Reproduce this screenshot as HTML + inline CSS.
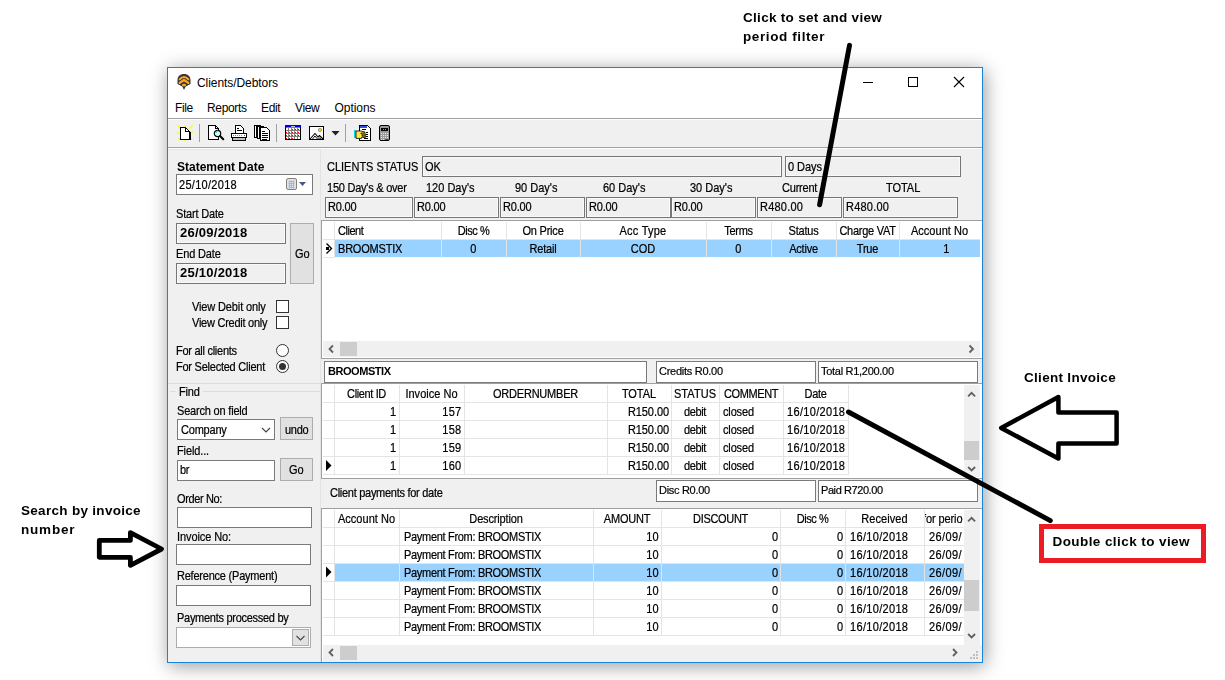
<!DOCTYPE html><html><head><meta charset="utf-8"><title>Clients/Debtors</title><style>
html,body{margin:0;padding:0;background:#fff;}
body{width:1225px;height:680px;position:relative;overflow:hidden;font-family:"Liberation Sans",sans-serif;}
div{position:absolute;box-sizing:border-box;white-space:nowrap;}
.t{font-size:11px;line-height:14px;color:#000;transform:scaleY(1.1);will-change:transform;-webkit-text-stroke:0.2px #000;}
.tb{font-size:11px;line-height:14px;color:#000;font-weight:bold;will-change:transform;}
.m{font-size:12px;line-height:16px;color:#000;letter-spacing:-0.35px;}
.ann{font-size:13.5px;line-height:19px;font-weight:bold;color:#000;letter-spacing:0.3px;}
.sunk{border:1px solid #767676;background:#f0f0f0;box-shadow:inset 0 0 0 1px #fafafa;}
.sunkw{border:1px solid #7a7a7a;background:#fff;}
.btn{border:1px solid #adadad;background:#e1e1e1;text-align:center;}
.hl{background:#99d1ff;}
.grid{background:#fff;border:1px solid #828790;overflow:hidden;}
.vl{background:#e6e6e6;width:1px;}
.hln{background:#e6e6e6;height:1px;}
.sb{background:#f0f0f0;}
.th{background:#cdcdcd;}
svg{position:absolute;overflow:visible;}
</style></head><body>
<div style="left:167px;top:67px;width:816px;height:596px;box-shadow:2px 3px 18px 0 rgba(0,0,0,0.40);background:#f0f0f0;border:1px solid #1883d7;"></div>
<div class="" style="left:168px;top:68px;width:814px;height:50px;background:#fff;"></div>
<div class="m" style="left:197px;top:75px;letter-spacing:-0.07px;">Clients/Debtors</div>
<div class="m" style="left:175px;top:100px;">File</div>
<div class="m" style="left:207px;top:100px;">Reports</div>
<div class="m" style="left:261px;top:100px;">Edit</div>
<div class="m" style="left:295px;top:100px;">View</div>
<div class="m" style="left:334.5px;top:100px;letter-spacing:-0.04px;">Options</div>
<div class="" style="left:168px;top:118px;width:814px;height:1px;background:#a0a0a0;"></div>
<div class="" style="left:168px;top:119px;width:814px;height:1px;background:#fff;"></div>
<div class="" style="left:168px;top:147px;width:814px;height:1px;background:#a0a0a0;"></div>
<div class="" style="left:168px;top:148px;width:814px;height:1px;background:#fff;"></div>
<div class="" style="left:168px;top:149px;width:153px;height:1px;background:#e3e3e3;"></div>
<div class="" style="left:320px;top:149px;width:1px;height:513px;background:#e3e3e3;"></div>
<div class="" style="left:168px;top:383px;width:152px;height:1px;background:#dcdcdc;"></div>
<div class="tb" style="left:176.5px;top:160px;font-size:12px;">Statement Date</div>
<div class="sunkw" style="left:176px;top:174px;width:137px;height:21px;"></div>
<div class="t" style="left:179px;top:178px;letter-spacing:0.29px;">25/10/2018</div>
<div class="t" style="left:176px;top:207px;letter-spacing:-0.17px;">Start Date</div>
<div class="sunk" style="left:176px;top:223px;width:110px;height:21px;"></div>
<div class="tb" style="left:179.5px;top:225px;font-size:13px;line-height:16px;letter-spacing:0.25px;">26/09/2018</div>
<div class="t" style="left:176px;top:247px;letter-spacing:-0.16px;">End Date</div>
<div class="sunk" style="left:176px;top:263px;width:110px;height:21px;"></div>
<div class="tb" style="left:179.5px;top:265px;font-size:13px;line-height:16px;letter-spacing:0.25px;">25/10/2018</div>
<div class="btn" style="left:290px;top:223px;width:24px;height:61px;"></div>
<div class="t" style="left:295px;top:247px;letter-spacing:-0.12px;">Go</div>
<div class="t" style="left:192px;top:300px;letter-spacing:-0.13px;">View Debit only</div>
<div class="" style="left:276px;top:300px;width:13px;height:13px;border:1px solid #333;background:#fff;"></div>
<div class="t" style="left:192px;top:316px;letter-spacing:-0.25px;">View Credit only</div>
<div class="" style="left:276px;top:316px;width:13px;height:13px;border:1px solid #333;background:#fff;"></div>
<div class="t" style="left:176px;top:344px;letter-spacing:-0.27px;">For all clients</div>
<div class="" style="left:276px;top:344px;width:13px;height:13px;border:1px solid #333;background:#fff;border-radius:50%;"></div>
<div class="t" style="left:176px;top:360px;letter-spacing:-0.24px;">For Selected Client</div>
<div class="" style="left:276px;top:360px;width:13px;height:13px;border:1px solid #333;background:#fff;border-radius:50%;"></div>
<div class="" style="left:279px;top:363px;width:7px;height:7px;background:#333;border-radius:50%;"></div>
<div class="" style="left:170px;top:391px;width:150px;height:1px;background:#dcdcdc;"></div>
<div class="t" style="left:176px;top:385px;letter-spacing:-0.19px;background:#f0f0f0;padding:0 3px;">Find</div>
<div class="t" style="left:177px;top:404px;letter-spacing:-0.19px;">Search on field</div>
<div class="sunkw" style="left:177px;top:419px;width:98px;height:21px;"></div>
<div class="t" style="left:180.5px;top:422.5px;letter-spacing:-0.21px;">Company</div>
<div class="btn" style="left:280px;top:417px;width:33px;height:23px;"></div>
<div class="t" style="left:284.8px;top:422.5px;letter-spacing:-0.25px;">undo</div>
<div class="t" style="left:177px;top:444px;letter-spacing:-0.12px;">Field...</div>
<div class="sunkw" style="left:177px;top:460px;width:98px;height:21px;"></div>
<div class="t" style="left:180px;top:463px;letter-spacing:-0.25px;">br</div>
<div class="btn" style="left:280px;top:458px;width:33px;height:23px;"></div>
<div class="t" style="left:289.2px;top:463px;letter-spacing:-0.12px;">Go</div>
<div class="t" style="left:177px;top:492px;letter-spacing:-0.37px;">Order No:</div>
<div class="sunkw" style="left:177px;top:507px;width:135px;height:21px;"></div>
<div class="t" style="left:177px;top:530px;letter-spacing:-0.09px;">Invoice No:</div>
<div class="sunkw" style="left:176px;top:544px;width:135px;height:21px;"></div>
<div class="t" style="left:177px;top:569px;letter-spacing:-0.22px;">Reference (Payment)</div>
<div class="sunkw" style="left:176px;top:585px;width:135px;height:21px;"></div>
<div class="t" style="left:177px;top:611px;letter-spacing:-0.28px;">Payments processed by</div>
<div class="" style="left:176px;top:627px;width:135px;height:21px;border:1px solid #adadad;background:#fff;"></div>
<div class="btn" style="left:292px;top:629px;width:17px;height:17px;"></div>
<div class="t" style="left:327px;top:160px;">CLIENTS STATUS</div>
<div class="sunk" style="left:422px;top:156px;width:360px;height:21px;"></div>
<div class="t" style="left:425px;top:160px;">OK</div>
<div class="sunk" style="left:785px;top:156px;width:176px;height:21px;"></div>
<div class="t" style="left:788px;top:160px;letter-spacing:-0.07px;">0 Days</div>
<div class="t" style="left:327px;top:181px;letter-spacing:-0.24px;">150 Day's &amp; over</div>
<div class="t" style="left:426px;top:181px;">120 Day's</div>
<div class="t" style="left:515px;top:181px;">90 Day's</div>
<div class="t" style="left:603px;top:181px;">60 Day's</div>
<div class="t" style="left:690px;top:181px;">30 Day's</div>
<div class="t" style="left:782px;top:181px;letter-spacing:-0.21px;">Current</div>
<div class="t" style="left:886px;top:181px;letter-spacing:-0.04px;">TOTAL</div>
<div class="sunk" style="left:325px;top:197px;width:88px;height:21px;"></div>
<div class="t" style="left:328px;top:200px;letter-spacing:-0.18px;">R0.00</div>
<div class="sunk" style="left:414px;top:197px;width:85px;height:21px;"></div>
<div class="t" style="left:417px;top:200px;letter-spacing:-0.18px;">R0.00</div>
<div class="sunk" style="left:500px;top:197px;width:85px;height:21px;"></div>
<div class="t" style="left:503px;top:200px;letter-spacing:-0.18px;">R0.00</div>
<div class="sunk" style="left:586px;top:197px;width:85px;height:21px;"></div>
<div class="t" style="left:589px;top:200px;letter-spacing:-0.18px;">R0.00</div>
<div class="sunk" style="left:671px;top:197px;width:85px;height:21px;"></div>
<div class="t" style="left:674px;top:200px;letter-spacing:-0.18px;">R0.00</div>
<div class="sunk" style="left:757px;top:197px;width:85px;height:21px;"></div>
<div class="t" style="left:760px;top:200px;letter-spacing:0.21px;">R480.00</div>
<div class="sunk" style="left:843px;top:197px;width:115px;height:21px;"></div>
<div class="t" style="left:846px;top:200px;letter-spacing:0.21px;">R480.00</div>
<div class="" style="left:321px;top:220px;width:661px;height:139px;background:#fff;border-left:1px solid #a0a0a0;border-top:1px solid #a0a0a0;border-bottom:1px solid #a0a0a0;"></div>
<div class="hl" style="left:335px;top:240px;width:645px;height:17px;"></div>
<div class="t" style="left:337.5px;top:224px;letter-spacing:-0.48px;">Client</div>
<div class="t" style="left:338px;top:242px;letter-spacing:-0.21px;">BROOMSTIX</div>
<div class="t" style="left:441px;top:224px;width:65px;text-align:center;letter-spacing:-0.45px;">Disc %</div>
<div class="t" style="left:441px;top:242px;width:65px;text-align:center;letter-spacing:0.30px;">0</div>
<div class="t" style="left:506px;top:224px;width:74px;text-align:center;letter-spacing:-0.20px;">On Price</div>
<div class="t" style="left:506px;top:242px;width:74px;text-align:center;letter-spacing:-0.21px;">Retail</div>
<div class="t" style="left:580px;top:224px;width:126px;text-align:center;letter-spacing:0.24px;">Acc Type</div>
<div class="t" style="left:580px;top:242px;width:126px;text-align:center;">COD</div>
<div class="t" style="left:706px;top:224px;width:65px;text-align:center;letter-spacing:-0.30px;">Terms</div>
<div class="t" style="left:706px;top:242px;width:65px;text-align:center;letter-spacing:0.30px;">0</div>
<div class="t" style="left:771px;top:224px;width:65px;text-align:center;letter-spacing:-0.22px;">Status</div>
<div class="t" style="left:771px;top:242px;width:65px;text-align:center;letter-spacing:-0.21px;">Active</div>
<div class="t" style="left:836px;top:224px;width:63px;text-align:center;letter-spacing:-0.27px;">Charge VAT</div>
<div class="t" style="left:836px;top:242px;width:63px;text-align:center;letter-spacing:-0.19px;">True</div>
<div class="t" style="left:899px;top:224px;width:81px;text-align:center;letter-spacing:0.03px;">Account No</div>
<div class="t" style="left:899px;top:242px;width:81px;text-align:center;padding-left:14px;letter-spacing:0.30px;">1</div>
<div class="" style="left:334px;top:222px;width:1px;height:36px;background:#e4e4e4;"></div>
<div class="" style="left:441px;top:222px;width:1px;height:36px;background:#e4e4e4;"></div>
<div class="" style="left:506px;top:222px;width:1px;height:36px;background:#e4e4e4;"></div>
<div class="" style="left:580px;top:222px;width:1px;height:36px;background:#e4e4e4;"></div>
<div class="" style="left:706px;top:222px;width:1px;height:36px;background:#e4e4e4;"></div>
<div class="" style="left:771px;top:222px;width:1px;height:36px;background:#e4e4e4;"></div>
<div class="" style="left:836px;top:222px;width:1px;height:36px;background:#e4e4e4;"></div>
<div class="" style="left:899px;top:222px;width:1px;height:36px;background:#e4e4e4;"></div>
<div class="" style="left:323px;top:239px;width:657px;height:1px;background:#e4e4e4;"></div>
<div class="" style="left:323px;top:257px;width:12px;height:1px;background:#e4e4e4;"></div>
<div class="sb" style="left:323px;top:341px;width:657px;height:16px;"></div>
<div class="th" style="left:340px;top:342px;width:17px;height:14px;"></div>
<div class="sunkw" style="left:324px;top:361px;width:323px;height:22px;"></div>
<div class="tb" style="left:327.5px;top:364px;letter-spacing:-0.45px;">BROOMSTIX</div>
<div class="sunkw" style="left:656px;top:361px;width:160px;height:22px;"></div>
<div class="t" style="left:659px;top:364.2px;letter-spacing:-0.27px;transform:none;">Credits R0.00</div>
<div class="sunkw" style="left:818px;top:361px;width:160px;height:22px;"></div>
<div class="t" style="left:821px;top:364.2px;letter-spacing:-0.29px;transform:none;">Total R1,200.00</div>
<div class="" style="left:321px;top:383px;width:661px;height:96px;background:#fff;border-left:1px solid #a0a0a0;border-top:1px solid #a0a0a0;border-bottom:1px solid #a0a0a0;"></div>
<div class="t" style="left:334px;top:387px;width:65px;text-align:center;letter-spacing:-0.38px;">Client ID</div>
<div class="t" style="left:399px;top:387px;width:65px;text-align:center;letter-spacing:0.02px;">Invoice No</div>
<div class="t" style="left:464px;top:387px;width:143px;text-align:center;letter-spacing:-0.21px;">ORDERNUMBER</div>
<div class="t" style="left:607px;top:387px;width:64px;text-align:center;letter-spacing:-0.04px;">TOTAL</div>
<div class="t" style="left:671px;top:387px;width:48px;text-align:center;letter-spacing:0.05px;">STATUS</div>
<div class="t" style="left:719px;top:387px;width:64px;text-align:center;letter-spacing:-0.39px;">COMMENT</div>
<div class="t" style="left:783px;top:387px;width:65px;text-align:center;letter-spacing:-0.35px;">Date</div>
<div class="t" style="left:334px;top:405px;width:62px;text-align:right;">1</div>
<div class="t" style="left:399px;top:405px;width:62.5px;text-align:right;letter-spacing:0.30px;">157</div>
<div class="t" style="left:607px;top:405px;width:62px;text-align:right;letter-spacing:-0.07px;">R150.00</div>
<div class="t" style="left:671px;top:405px;width:48px;text-align:center;letter-spacing:-0.34px;">debit</div>
<div class="t" style="left:723px;top:405px;letter-spacing:-0.15px;">closed</div>
<div class="t" style="left:787px;top:405px;letter-spacing:0.32px;">16/10/2018</div>
<div class="t" style="left:334px;top:423px;width:62px;text-align:right;">1</div>
<div class="t" style="left:399px;top:423px;width:62.5px;text-align:right;letter-spacing:0.30px;">158</div>
<div class="t" style="left:607px;top:423px;width:62px;text-align:right;letter-spacing:-0.07px;">R150.00</div>
<div class="t" style="left:671px;top:423px;width:48px;text-align:center;letter-spacing:-0.34px;">debit</div>
<div class="t" style="left:723px;top:423px;letter-spacing:-0.15px;">closed</div>
<div class="t" style="left:787px;top:423px;letter-spacing:0.32px;">16/10/2018</div>
<div class="t" style="left:334px;top:441px;width:62px;text-align:right;">1</div>
<div class="t" style="left:399px;top:441px;width:62.5px;text-align:right;letter-spacing:0.30px;">159</div>
<div class="t" style="left:607px;top:441px;width:62px;text-align:right;letter-spacing:-0.07px;">R150.00</div>
<div class="t" style="left:671px;top:441px;width:48px;text-align:center;letter-spacing:-0.34px;">debit</div>
<div class="t" style="left:723px;top:441px;letter-spacing:-0.15px;">closed</div>
<div class="t" style="left:787px;top:441px;letter-spacing:0.32px;">16/10/2018</div>
<div class="t" style="left:334px;top:459px;width:62px;text-align:right;">1</div>
<div class="t" style="left:399px;top:459px;width:62.5px;text-align:right;letter-spacing:0.30px;">160</div>
<div class="t" style="left:607px;top:459px;width:62px;text-align:right;letter-spacing:-0.07px;">R150.00</div>
<div class="t" style="left:671px;top:459px;width:48px;text-align:center;letter-spacing:-0.34px;">debit</div>
<div class="t" style="left:723px;top:459px;letter-spacing:-0.15px;">closed</div>
<div class="t" style="left:787px;top:459px;letter-spacing:0.32px;">16/10/2018</div>
<div class="" style="left:334px;top:385px;width:1px;height:90px;background:#e4e4e4;"></div>
<div class="" style="left:399px;top:385px;width:1px;height:90px;background:#e4e4e4;"></div>
<div class="" style="left:464px;top:385px;width:1px;height:90px;background:#e4e4e4;"></div>
<div class="" style="left:607px;top:385px;width:1px;height:90px;background:#e4e4e4;"></div>
<div class="" style="left:671px;top:385px;width:1px;height:90px;background:#e4e4e4;"></div>
<div class="" style="left:719px;top:385px;width:1px;height:90px;background:#e4e4e4;"></div>
<div class="" style="left:783px;top:385px;width:1px;height:90px;background:#e4e4e4;"></div>
<div class="" style="left:848px;top:385px;width:1px;height:90px;background:#e4e4e4;"></div>
<div class="" style="left:323px;top:402px;width:526px;height:1px;background:#e4e4e4;"></div>
<div class="" style="left:323px;top:420px;width:526px;height:1px;background:#e4e4e4;"></div>
<div class="" style="left:323px;top:438px;width:526px;height:1px;background:#e4e4e4;"></div>
<div class="" style="left:323px;top:456px;width:526px;height:1px;background:#e4e4e4;"></div>
<div class="" style="left:323px;top:474px;width:526px;height:1px;background:#e4e4e4;"></div>
<div class="sb" style="left:964px;top:385px;width:16px;height:92px;"></div>
<div class="th" style="left:964px;top:441px;width:15px;height:19px;"></div>
<div class="t" style="left:330px;top:486px;letter-spacing:-0.28px;">Client payments for date</div>
<div class="sunkw" style="left:656px;top:480px;width:160px;height:22px;"></div>
<div class="t" style="left:659px;top:483.2px;letter-spacing:-0.30px;transform:none;">Disc R0.00</div>
<div class="sunkw" style="left:818px;top:480px;width:160px;height:22px;"></div>
<div class="t" style="left:821px;top:483.2px;letter-spacing:-0.42px;transform:none;">Paid R720.00</div>
<div class="" style="left:321px;top:508px;width:661px;height:154px;background:#fff;border-left:1px solid #a0a0a0;border-top:1px solid #a0a0a0;"></div>
<div class="hl" style="left:335px;top:564px;width:629px;height:17px;"></div>
<div class="t" style="left:334px;top:512px;width:65px;text-align:center;letter-spacing:0.03px;">Account No</div>
<div class="t" style="left:399px;top:512px;width:194px;text-align:center;letter-spacing:-0.16px;">Description</div>
<div class="t" style="left:593px;top:512px;width:68px;text-align:center;letter-spacing:-0.23px;">AMOUNT</div>
<div class="t" style="left:661px;top:512px;width:119px;text-align:center;letter-spacing:-0.33px;">DISCOUNT</div>
<div class="t" style="left:780px;top:512px;width:65px;text-align:center;letter-spacing:-0.45px;">Disc %</div>
<div class="t" style="left:845px;top:512px;width:79px;text-align:center;letter-spacing:0.05px;">Received</div>
<div class="t" style="left:925px;top:512px;width:38px;overflow:hidden;height:14px;"><span style="position:relative;left:-2px;letter-spacing:-0.1px;">for perio</span></div>
<div class="t" style="left:403.5px;top:530px;letter-spacing:-0.31px;">Payment From: BROOMSTIX</div>
<div class="t" style="left:593px;top:530px;width:66px;text-align:right;letter-spacing:0.3px;">10</div>
<div class="t" style="left:661px;top:530px;width:117px;text-align:right;">0</div>
<div class="t" style="left:780px;top:530px;width:63px;text-align:right;">0</div>
<div class="t" style="left:849.5px;top:530px;letter-spacing:0.32px;">16/10/2018</div>
<div class="t" style="left:928.5px;top:530px;letter-spacing:0.40px;">26/09/</div>
<div class="t" style="left:403.5px;top:548px;letter-spacing:-0.31px;">Payment From: BROOMSTIX</div>
<div class="t" style="left:593px;top:548px;width:66px;text-align:right;letter-spacing:0.3px;">10</div>
<div class="t" style="left:661px;top:548px;width:117px;text-align:right;">0</div>
<div class="t" style="left:780px;top:548px;width:63px;text-align:right;">0</div>
<div class="t" style="left:849.5px;top:548px;letter-spacing:0.32px;">16/10/2018</div>
<div class="t" style="left:928.5px;top:548px;letter-spacing:0.40px;">26/09/</div>
<div class="t" style="left:403.5px;top:566px;letter-spacing:-0.31px;">Payment From: BROOMSTIX</div>
<div class="t" style="left:593px;top:566px;width:66px;text-align:right;letter-spacing:0.3px;">10</div>
<div class="t" style="left:661px;top:566px;width:117px;text-align:right;">0</div>
<div class="t" style="left:780px;top:566px;width:63px;text-align:right;">0</div>
<div class="t" style="left:849.5px;top:566px;letter-spacing:0.32px;">16/10/2018</div>
<div class="t" style="left:928.5px;top:566px;letter-spacing:0.40px;">26/09/</div>
<div class="t" style="left:403.5px;top:584px;letter-spacing:-0.31px;">Payment From: BROOMSTIX</div>
<div class="t" style="left:593px;top:584px;width:66px;text-align:right;letter-spacing:0.3px;">10</div>
<div class="t" style="left:661px;top:584px;width:117px;text-align:right;">0</div>
<div class="t" style="left:780px;top:584px;width:63px;text-align:right;">0</div>
<div class="t" style="left:849.5px;top:584px;letter-spacing:0.32px;">16/10/2018</div>
<div class="t" style="left:928.5px;top:584px;letter-spacing:0.40px;">26/09/</div>
<div class="t" style="left:403.5px;top:602px;letter-spacing:-0.31px;">Payment From: BROOMSTIX</div>
<div class="t" style="left:593px;top:602px;width:66px;text-align:right;letter-spacing:0.3px;">10</div>
<div class="t" style="left:661px;top:602px;width:117px;text-align:right;">0</div>
<div class="t" style="left:780px;top:602px;width:63px;text-align:right;">0</div>
<div class="t" style="left:849.5px;top:602px;letter-spacing:0.32px;">16/10/2018</div>
<div class="t" style="left:928.5px;top:602px;letter-spacing:0.40px;">26/09/</div>
<div class="t" style="left:403.5px;top:620px;letter-spacing:-0.31px;">Payment From: BROOMSTIX</div>
<div class="t" style="left:593px;top:620px;width:66px;text-align:right;letter-spacing:0.3px;">10</div>
<div class="t" style="left:661px;top:620px;width:117px;text-align:right;">0</div>
<div class="t" style="left:780px;top:620px;width:63px;text-align:right;">0</div>
<div class="t" style="left:849.5px;top:620px;letter-spacing:0.32px;">16/10/2018</div>
<div class="t" style="left:928.5px;top:620px;letter-spacing:0.40px;">26/09/</div>
<div class="" style="left:334px;top:510px;width:1px;height:126px;background:#e4e4e4;"></div>
<div class="" style="left:399px;top:510px;width:1px;height:126px;background:#e4e4e4;"></div>
<div class="" style="left:593px;top:510px;width:1px;height:126px;background:#e4e4e4;"></div>
<div class="" style="left:661px;top:510px;width:1px;height:126px;background:#e4e4e4;"></div>
<div class="" style="left:780px;top:510px;width:1px;height:126px;background:#e4e4e4;"></div>
<div class="" style="left:845px;top:510px;width:1px;height:126px;background:#e4e4e4;"></div>
<div class="" style="left:924px;top:510px;width:1px;height:126px;background:#e4e4e4;"></div>
<div class="" style="left:323px;top:527px;width:641px;height:1px;background:#e4e4e4;"></div>
<div class="" style="left:323px;top:545px;width:641px;height:1px;background:#e4e4e4;"></div>
<div class="" style="left:323px;top:563px;width:641px;height:1px;background:#e4e4e4;"></div>
<div class="" style="left:323px;top:581px;width:641px;height:1px;background:#e4e4e4;"></div>
<div class="" style="left:323px;top:599px;width:641px;height:1px;background:#e4e4e4;"></div>
<div class="" style="left:323px;top:617px;width:641px;height:1px;background:#e4e4e4;"></div>
<div class="" style="left:323px;top:635px;width:641px;height:1px;background:#e4e4e4;"></div>
<div class="sb" style="left:964px;top:510px;width:16px;height:135px;"></div>
<div class="th" style="left:964px;top:580px;width:15px;height:31px;"></div>
<div class="sb" style="left:323px;top:645px;width:659px;height:17px;"></div>
<div class="th" style="left:340px;top:646px;width:17px;height:14px;"></div>
<svg width="1225" height="680" style="left:0;top:0;" shape-rendering="crispEdges">
<g transform="translate(177.5,74)" shape-rendering="auto"><path d="M6.5 0C10.6 0 13 2.6 13 6V10L8.2 12.6 6.5 16 4.8 12.6 0 10V6C0 2.6 2.4 0 6.5 0Z" fill="#3b3340"/><path d="M2.2 5.3Q6.5 0.9 10.8 5.3" fill="none" stroke="#fbab18" stroke-width="2" stroke-linecap="round"/><path d="M2.2 8.9L6.5 6 10.8 8.9" fill="none" stroke="#fbab18" stroke-width="2.3" stroke-linecap="round" stroke-linejoin="round"/><ellipse cx="6.5" cy="11.1" rx="2" ry="1.3" fill="#fbab18"/></g>
<rect x="863" y="82" width="10" height="1" fill="#000"/>
<rect x="908.5" y="77.5" width="9" height="9" fill="none" stroke="#000" stroke-width="1"/>
<path d="M954 77L964 87M964 77L954 87" stroke="#000" stroke-width="1.1" shape-rendering="auto"/>
<rect x="199" y="124" width="1" height="18" fill="#a0a0a0"/>
<rect x="276" y="124" width="1" height="18" fill="#a0a0a0"/>
<rect x="345" y="124" width="1" height="18" fill="#a0a0a0"/>
<g transform="translate(177,125)"><path d="M0 0l3 3M16 0l-4 4M0 8h3M16 7h-3M1 15l2-2M15 15l-2-2M8 0v2M8 16v-2" stroke="#ffff00" stroke-width="1.3" shape-rendering="auto"/><path d="M3.5 2.5h5l4 4v7.5h-9z" fill="#fff" stroke="#000"/><path d="M8.5 2.5v4h4" fill="none" stroke="#000"/><path d="M13.5 7v7.5h-9" fill="none" stroke="#000"/></g>
<g transform="translate(208,125)"><path d="M0.5 0.5h7l3 3v10.5h-10z" fill="#fff" stroke="#000"/><path d="M7.5 0.5v3h3" fill="none" stroke="#000"/><circle cx="9.5" cy="8.5" r="3.2" fill="#d8ffff" stroke="#000" stroke-width="1.2" shape-rendering="auto"/><path d="M8 8a2 2 0 0 1 2-2" stroke="#00d8e8" stroke-width="1.2" fill="none" shape-rendering="auto"/><path d="M12 11l3.3 3.3" stroke="#000" stroke-width="2" stroke-linecap="round" shape-rendering="auto"/></g>
<g transform="translate(231,125)"><path d="M4.5 0.5h5l3 3v5h-8z" fill="#fff" stroke="#000"/><path d="M6 3h2M6 5h5M9 3v0" stroke="#000"/><rect x="0.5" y="8.5" width="15" height="4" fill="#fff" stroke="#000"/><path d="M2 10.5h10" stroke="#888" stroke-dasharray="1 1"/><rect x="13" y="10" width="1" height="1" fill="#f00"/><rect x="1.5" y="12.5" width="13" height="2.5" fill="#c0c0c0" stroke="#000"/></g>
<g transform="translate(254,125)"><path d="M0.5 0.5h6v12h-6z" fill="#fff" stroke="#000"/><path d="M3.5 1.5h6v12h-6z" fill="#fff" stroke="#000"/><path d="M6.5 2.5h6l3 3v10h-9z" fill="#fff" stroke="#000"/><path d="M2 1v11M5 2v11" stroke="#000"/><path d="M8 6h3M8 8h6M8 10h6M8 12h6M8 14h5" stroke="#000"/></g>
<g transform="translate(285,125)"><rect x="0" y="0" width="16" height="15" fill="#000"/><rect x="1" y="2" width="14" height="12" fill="#808080"/><rect x="0" y="0" width="16" height="2" fill="#0000e8"/><rect x="6" y="1" width="4" height="1" fill="#c0c0c0"/>
<rect x="1" y="3" width="2" height="2" fill="#fff"/>
<rect x="1" y="6" width="2" height="2" fill="#fff"/>
<rect x="1" y="7" width="1" height="1" fill="#f00"/>
<rect x="1" y="9" width="2" height="2" fill="#fff"/>
<rect x="1" y="10" width="1" height="1" fill="#f00"/>
<rect x="1" y="12" width="2" height="2" fill="#fff"/>
<rect x="1" y="13" width="1" height="1" fill="#f00"/>
<rect x="4" y="3" width="2" height="2" fill="#fff"/>
<rect x="4" y="6" width="2" height="2" fill="#fff"/>
<rect x="4" y="7" width="1" height="1" fill="#f00"/>
<rect x="4" y="9" width="2" height="2" fill="#fff"/>
<rect x="4" y="10" width="1" height="1" fill="#f00"/>
<rect x="4" y="12" width="2" height="2" fill="#fff"/>
<rect x="4" y="13" width="1" height="1" fill="#f00"/>
<rect x="7" y="3" width="2" height="2" fill="#fff"/>
<rect x="7" y="4" width="1" height="1" fill="#f00"/>
<rect x="7" y="6" width="2" height="2" fill="#fff"/>
<rect x="7" y="7" width="1" height="1" fill="#f00"/>
<rect x="7" y="9" width="2" height="2" fill="#fff"/>
<rect x="7" y="10" width="1" height="1" fill="#f00"/>
<rect x="7" y="12" width="2" height="2" fill="#fff"/>
<rect x="7" y="13" width="1" height="1" fill="#f00"/>
<rect x="10" y="3" width="2" height="2" fill="#fff"/>
<rect x="10" y="4" width="1" height="1" fill="#f00"/>
<rect x="10" y="6" width="2" height="2" fill="#fff"/>
<rect x="10" y="7" width="1" height="1" fill="#f00"/>
<rect x="10" y="9" width="2" height="2" fill="#fff"/>
<rect x="10" y="10" width="1" height="1" fill="#f00"/>
<rect x="10" y="12" width="2" height="2" fill="#fff"/>
<rect x="13" y="3" width="2" height="2" fill="#fff"/>
<rect x="13" y="4" width="1" height="1" fill="#f00"/>
<rect x="13" y="6" width="2" height="2" fill="#fff"/>
<rect x="13" y="7" width="1" height="1" fill="#f00"/>
<rect x="13" y="9" width="2" height="2" fill="#fff"/>
<rect x="13" y="10" width="1" height="1" fill="#f00"/>
<rect x="13" y="12" width="2" height="2" fill="#fff"/>
</g>
<g transform="translate(309,126)"><rect x="0.5" y="0.5" width="14" height="13" fill="#fff" stroke="#000"/><circle cx="11" cy="4" r="1.6" fill="#ffe800" stroke="#555" stroke-width="0.6" shape-rendering="auto"/><path d="M1 13L6 7.5 9 11 10.5 9.5 14 13" fill="none" stroke="#000" stroke-width="1.1" shape-rendering="auto"/><path d="M3.5 13L6 10 8.5 13M9.5 13l1-1.3 1.3 1.3" fill="none" stroke="#000" stroke-width="0.9" shape-rendering="auto"/></g>
<path d="M331.5 131h8l-4 4.5z" fill="#222" shape-rendering="auto"/>
<g transform="translate(354,125)"><path d="M5.5 0.5h8l2.5 2.5v12.5h-10.5z" fill="#fff" stroke="#000"/><path d="M6 2h7" stroke="#3050e0" stroke-width="1.4"/><path d="M8 4h4M12 7h2M12 9h2M12 11h2M10 13h4" stroke="#000"/><rect x="0" y="5" width="2" height="8" fill="#00d8e8"/><path d="M2 6h5l4 1v1h-4v1h5v1.2h-4v1h3.5v1.2h-4v1h-5.5z" fill="#ffe94a" stroke="#000" stroke-width="0.8" shape-rendering="auto"/></g>
<g transform="translate(379,125)"><rect x="0.5" y="0.5" width="10" height="15" rx="1.5" fill="#9a9a9a" stroke="#000" shape-rendering="auto"/><rect x="2" y="3" width="7" height="3" fill="#000"/><rect x="4" y="4" width="1" height="1" fill="#00e0f0"/><rect x="6" y="4" width="1" height="1" fill="#00e0f0"/>
<rect x="2" y="7.5" width="1" height="1" fill="#e8e8e8"/>
<rect x="2" y="9.5" width="1" height="1" fill="#e8e8e8"/>
<rect x="2" y="11.5" width="1" height="1" fill="#e8e8e8"/>
<rect x="2" y="13.5" width="1" height="1" fill="#e8e8e8"/>
<rect x="4" y="7.5" width="1" height="1" fill="#e8e8e8"/>
<rect x="4" y="9.5" width="1" height="1" fill="#e8e8e8"/>
<rect x="4" y="11.5" width="1" height="1" fill="#e8e8e8"/>
<rect x="4" y="13.5" width="1" height="1" fill="#e8e8e8"/>
<rect x="6" y="7.5" width="1" height="1" fill="#e8e8e8"/>
<rect x="6" y="9.5" width="1" height="1" fill="#e8e8e8"/>
<rect x="6" y="11.5" width="1" height="1" fill="#e8e8e8"/>
<rect x="6" y="13.5" width="1" height="1" fill="#e8e8e8"/>
<rect x="8" y="7.5" width="1" height="1" fill="#e8e8e8"/>
<rect x="8" y="9.5" width="1" height="1" fill="#e8e8e8"/>
<rect x="8" y="11.5" width="1" height="1" fill="#e8e8e8"/>
<rect x="8" y="13.5" width="1" height="1" fill="#e8e8e8"/>
<rect x="6" y="13.5" width="3" height="1" fill="#f00"/></g>
<g transform="translate(286,178)" shape-rendering="auto"><rect x="0.5" y="0.5" width="10" height="11" rx="1.5" fill="#dfe3ee" stroke="#8a8078"/><path d="M2.5 3.5h6M2.5 5.5h6M2.5 7.5h6M2.5 9.5h6M3.5 2.5v8M5.5 2.5v8M7.5 2.5v8" stroke="#a8b0c8" stroke-width="0.8"/></g>
<path d="M299 182h7l-3.5 4z" fill="#44588c" shape-rendering="auto"/>
<path d="M262 428l4.0 4 4.0 -4" fill="none" stroke="#444" stroke-width="1.1" shape-rendering="auto"/>
<path d="M296.5 636l4.0 4 4.0 -4" fill="none" stroke="#444" stroke-width="1.1" shape-rendering="auto"/>
<path d="M333 345.5L329.5 349L333 352.5" fill="none" stroke="#606060" stroke-width="1.8" shape-rendering="auto"/>
<path d="M969.5 345.5L973.0 349L969.5 352.5" fill="none" stroke="#606060" stroke-width="1.8" shape-rendering="auto"/>
<path d="M968.1 396.3L971.6 392.8L975.1 396.3" fill="none" stroke="#606060" stroke-width="1.8" shape-rendering="auto"/>
<path d="M968.1 467L971.6 470.5L975.1 467" fill="none" stroke="#606060" stroke-width="1.8" shape-rendering="auto"/>
<path d="M968.1 521.3L971.6 517.8L975.1 521.3" fill="none" stroke="#606060" stroke-width="1.8" shape-rendering="auto"/>
<path d="M968.1 634L971.6 637.5L975.1 634" fill="none" stroke="#606060" stroke-width="1.8" shape-rendering="auto"/>
<path d="M333 649.0L329.5 652.5L333 656.0" fill="none" stroke="#606060" stroke-width="1.8" shape-rendering="auto"/>
<path d="M953 649.0L956.5 652.5L953 656.0" fill="none" stroke="#606060" stroke-width="1.8" shape-rendering="auto"/>
<path d="M326.5 243.5L331.5 248.5 326.5 253.5" fill="none" stroke="#000" stroke-width="1.4" shape-rendering="auto"/><rect x="326" y="247" width="3" height="3" fill="#000"/>
<path d="M326 460l5.5 5.5-5.5 5.5z" fill="#000" shape-rendering="auto"/>
<path d="M326 566.5l5.5 5.5-5.5 5.5z" fill="#000" shape-rendering="auto"/>
<rect x="976" y="651" width="2" height="2" fill="#bfbfbf"/>
<rect x="976" y="654" width="2" height="2" fill="#bfbfbf"/>
<rect x="976" y="657" width="2" height="2" fill="#bfbfbf"/>
<rect x="973" y="654" width="2" height="2" fill="#bfbfbf"/>
<rect x="973" y="657" width="2" height="2" fill="#bfbfbf"/>
<rect x="970" y="657" width="2" height="2" fill="#bfbfbf"/>
</svg>
<div class="ann" style="left:743px;top:7.6px;">Click to set and view</div>
<div class="ann" style="left:743px;top:26.6px;letter-spacing:0.6px;">period filter</div>
<div class="ann" style="left:21px;top:500.5px;">Search by invoice</div>
<div class="ann" style="left:21px;top:519.5px;letter-spacing:0.8px;">number</div>
<div class="ann" style="left:1024px;top:367.6px;">Client Invoice</div>
<div class="" style="left:1039px;top:524px;width:167px;height:39px;border:5px solid #ed1c24;background:#fff;"></div>
<div class="ann" style="left:1052.5px;top:531.5px;letter-spacing:0.42px;">Double click to view</div>
<svg width="1225" height="680" style="left:0;top:0;">
<line x1="849.5" y1="45.4" x2="819.6" y2="204.8" stroke="#000" stroke-width="5" stroke-linecap="round"/>
<line x1="848.5" y1="412" x2="1050.3" y2="520.6" stroke="#000" stroke-width="5" stroke-linecap="round"/>
<path d="M99.3 540.4H130.4V532.6L161.6 549 130.4 565.3V557.3H99.3Z" fill="#fff" stroke="#000" stroke-width="4.8" stroke-linejoin="round"/>
<path d="M1116.6 412.4H1058.4V397L1001.2 428 1058.4 458.4V443.5H1116.6Z" fill="#fff" stroke="#000" stroke-width="4.5" stroke-linejoin="round"/>
</svg>
</body></html>
